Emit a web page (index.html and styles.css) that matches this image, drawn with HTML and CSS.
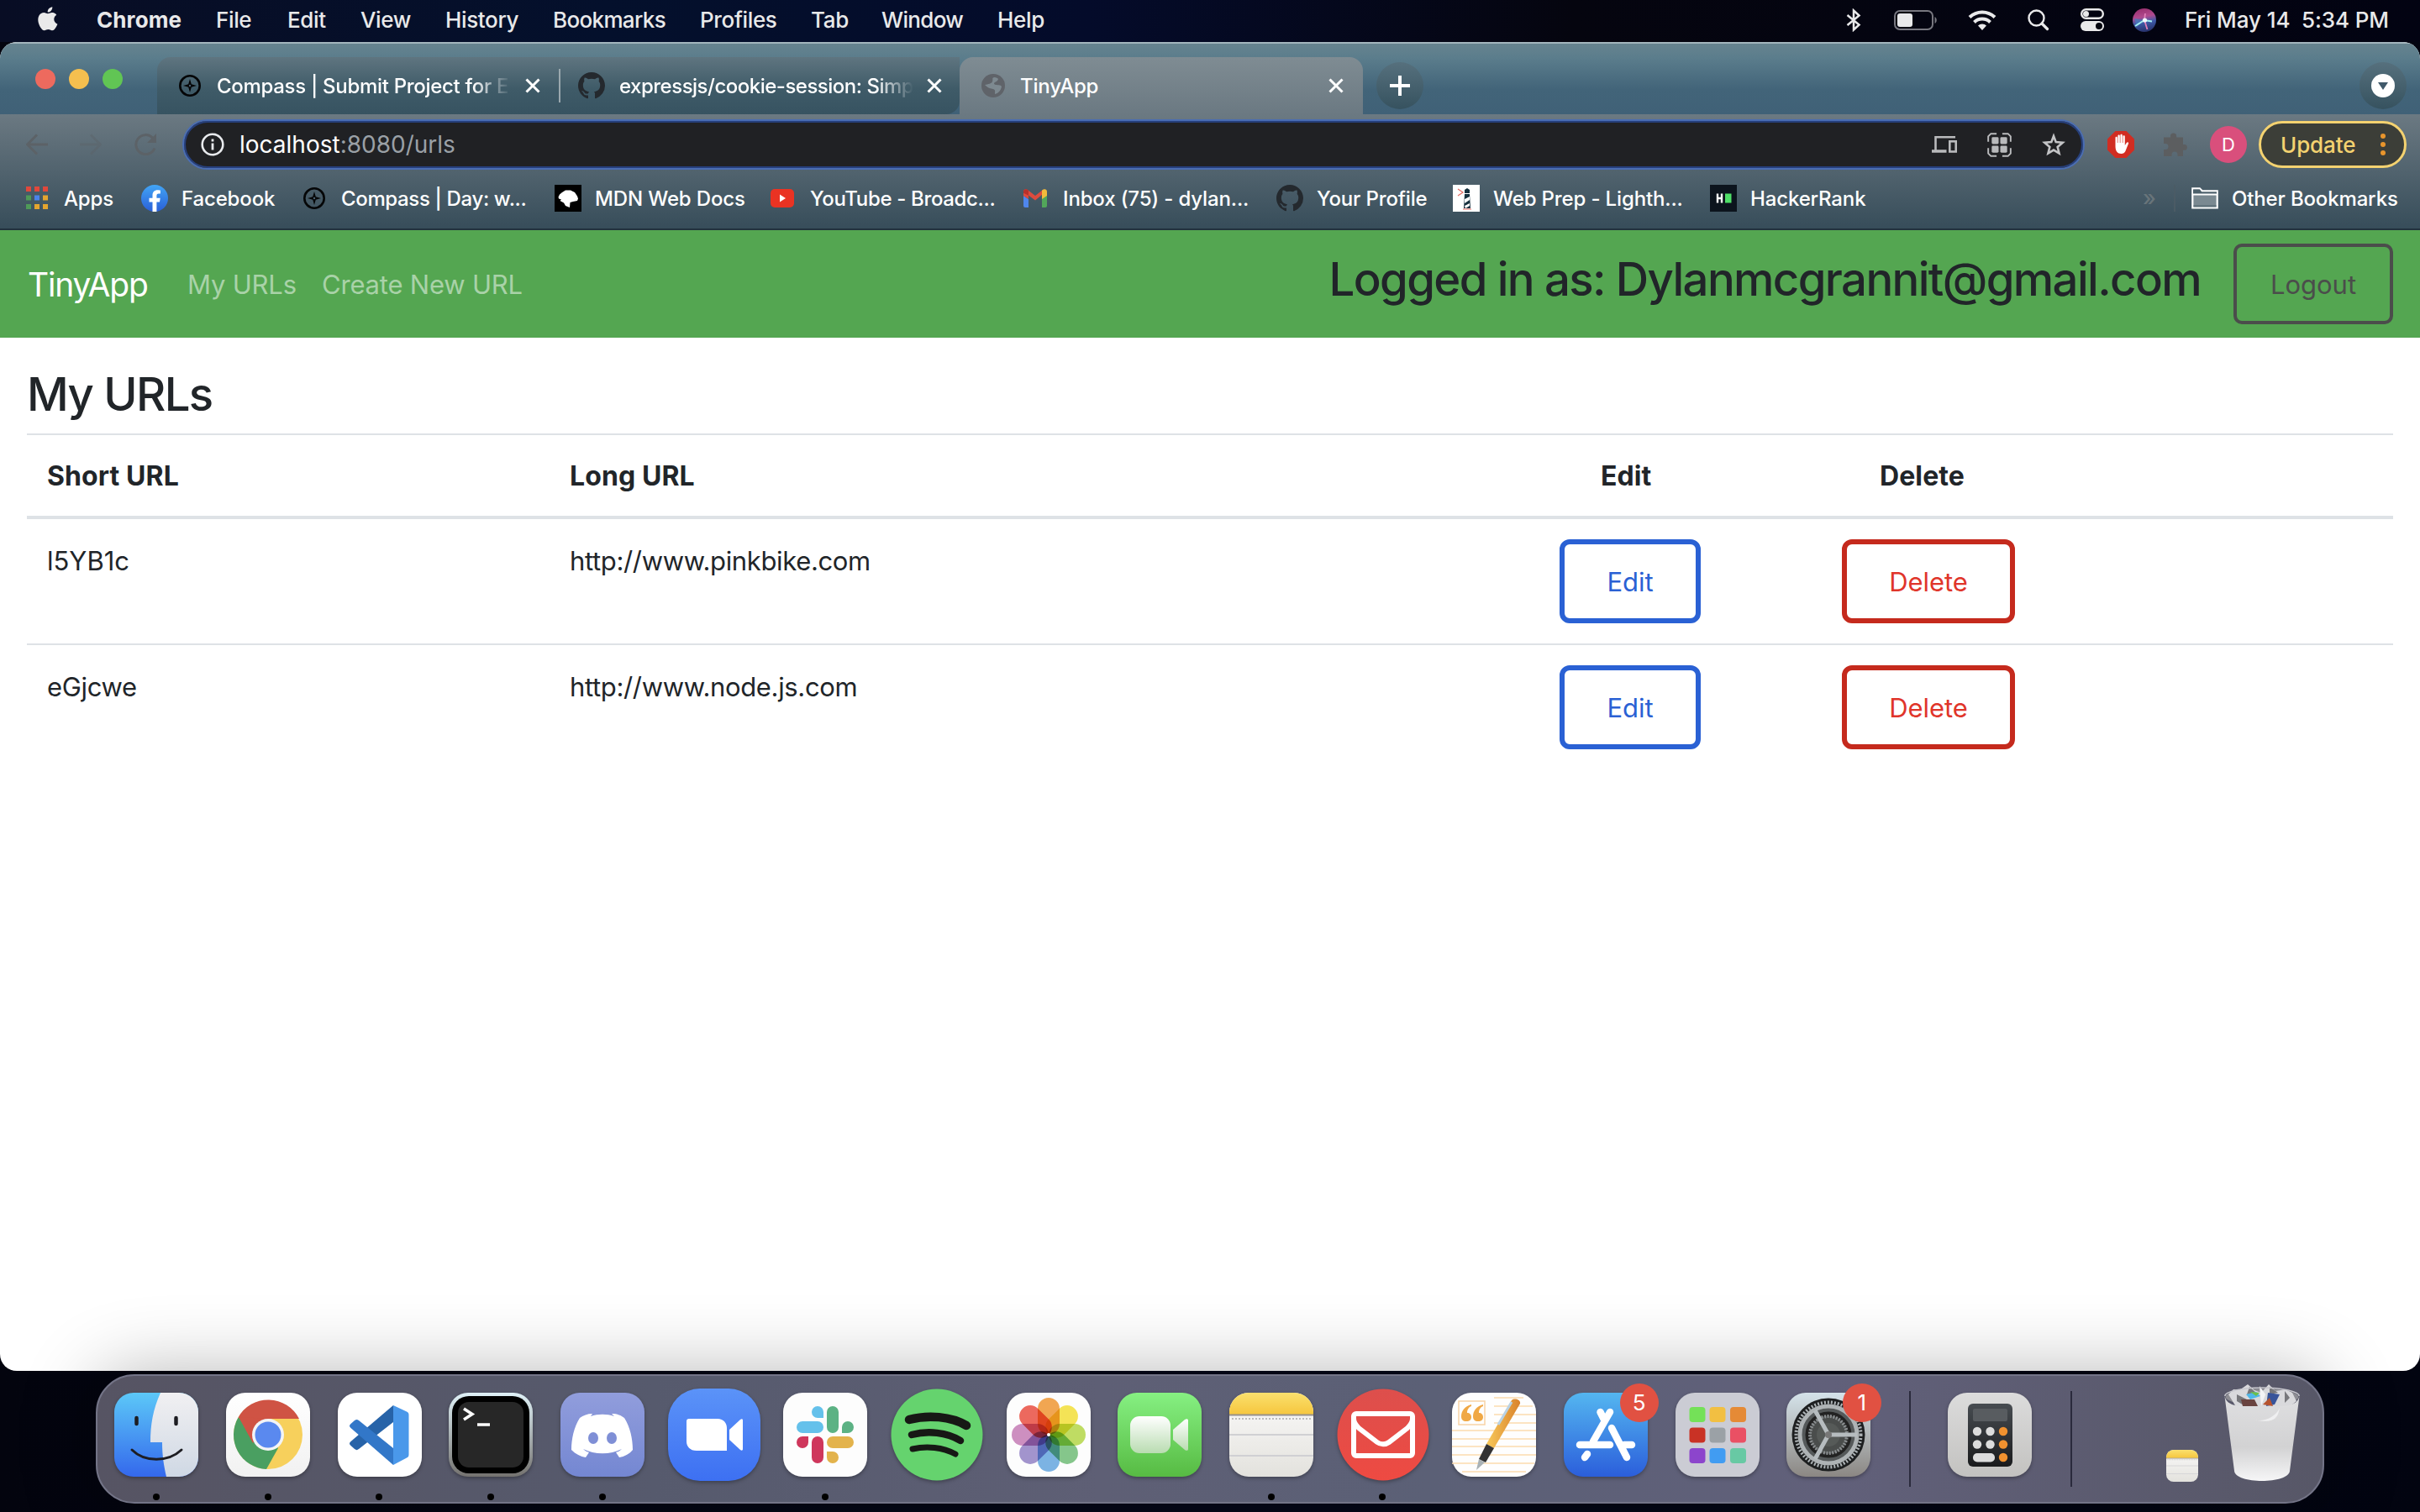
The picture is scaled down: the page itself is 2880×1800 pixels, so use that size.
FILE: index.html
```html
<!DOCTYPE html>
<html lang="en">
<head>
<meta charset="utf-8">
<title>TinyApp</title>
<link rel="stylesheet" href="styles.css">
</head>
<body>
<svg class="defs" width="0" height="0" aria-hidden="true">
  <defs>
    <linearGradient id="gFinder" x2="0" y2="1"><stop offset="0" stop-color="#5cc8f8"/><stop offset="1" stop-color="#3468ec"/></linearGradient>
    <linearGradient id="gFace" x2="0" y2="1"><stop offset="0" stop-color="#f1f0f2"/><stop offset="1" stop-color="#cfd8e4"/></linearGradient>
    <linearGradient id="gWhite" x2="0" y2="1"><stop offset="0" stop-color="#fff"/><stop offset="1" stop-color="#f1f1f1"/></linearGradient>
    <linearGradient id="gTerm" x2="0" y2="1"><stop offset="0" stop-color="#dff1f7"/><stop offset="1" stop-color="#74726f"/></linearGradient>
    <linearGradient id="gDiscord" x2="0" y2="1"><stop offset="0" stop-color="#919ddc"/><stop offset="1" stop-color="#7487d2"/></linearGradient>
    <linearGradient id="gZoom" x2="0" y2="1"><stop offset="0" stop-color="#5b93f8"/><stop offset="1" stop-color="#3d70f2"/></linearGradient>
    <linearGradient id="gFt" x2="0" y2="1"><stop offset="0" stop-color="#86f082"/><stop offset="1" stop-color="#57bb43"/></linearGradient>
    <linearGradient id="gCam" x2="0" y2="1"><stop offset="0" stop-color="#fff"/><stop offset="1" stop-color="#b9dcb1"/></linearGradient>
    <linearGradient id="gNote" x2="0" y2="1"><stop offset="0" stop-color="#fae06e"/><stop offset="1" stop-color="#f6c63d"/></linearGradient>
    <linearGradient id="gPaper" x2="0" y2="1"><stop offset="0" stop-color="#fbfafa"/><stop offset="1" stop-color="#e3e2dd"/></linearGradient>
    <linearGradient id="gMail" x2="0" y2="1"><stop offset="0" stop-color="#dd4f4c"/><stop offset="1" stop-color="#ee4a42"/></linearGradient>
    <linearGradient id="gStore" x2="0" y2="1"><stop offset="0" stop-color="#54b6f0"/><stop offset="1" stop-color="#2b5edb"/></linearGradient>
    <linearGradient id="gSet" x2="0" y2="1"><stop offset="0" stop-color="#d5e3ea"/><stop offset="1" stop-color="#8b8783"/></linearGradient>
    <linearGradient id="gCalc" x2="0" y2="1"><stop offset="0" stop-color="#dcdcdc"/><stop offset="1" stop-color="#c3c2c0"/></linearGradient>
    <linearGradient id="gCalcB" x2="0" y2="1"><stop offset="0" stop-color="#474c51"/><stop offset="1" stop-color="#1a1b1d"/></linearGradient>
    <linearGradient id="gTrash" x2="0" y2="1"><stop offset="0" stop-color="#dfdfe1"/><stop offset=".6" stop-color="#d2d2d3"/><stop offset="1" stop-color="#f6f6f7"/></linearGradient>
    <linearGradient id="gFb" x2="0" y2="1"><stop offset="0" stop-color="#42a5f5"/><stop offset="1" stop-color="#2a5fd8"/></linearGradient>
    <linearGradient id="gPen" x2="1" y2="0"><stop offset="0" stop-color="#f8c95a"/><stop offset="1" stop-color="#d9822b"/></linearGradient>
    <linearGradient id="gSiri" x1=".4" x2=".6" y2="1"><stop offset="0" stop-color="#9a3070"/><stop offset=".35" stop-color="#b04a8e"/><stop offset=".6" stop-color="#3d5aa8"/><stop offset="1" stop-color="#262f66"/></linearGradient>
    <symbol id="github" viewBox="0 0 16 16"><path d="M8 0C3.58 0 0 3.58 0 8c0 3.54 2.29 6.53 5.47 7.59.4.07.55-.17.55-.38 0-.19-.01-.82-.01-1.49-2.01.37-2.53-.49-2.69-.94-.09-.23-.48-.94-.82-1.13-.28-.15-.68-.52-.01-.53.63-.01 1.08.58 1.23.82.72 1.21 1.87.87 2.33.66.07-.52.28-.87.51-1.07-1.78-.2-3.64-.89-3.64-3.95 0-.87.31-1.59.82-2.15-.08-.2-.36-1.02.08-2.12 0 0 .67-.21 2.2.82.64-.18 1.32-.27 2-.27s1.36.09 2 .27c1.53-1.04 2.2-.82 2.2-.82.44 1.1.16 1.92.08 2.12.51.56.82 1.27.82 2.15 0 3.07-1.87 3.75-3.65 3.95.29.25.54.73.54 1.48 0 1.07-.01 1.93-.01 2.2 0 .21.15.46.55.38A8.01 8.01 0 0 0 16 8c0-4.42-3.58-8-8-8z"/></symbol>
    <symbol id="compass" viewBox="0 0 26 26"><circle cx="13" cy="13" r="11.7" fill="none" stroke="#050607" stroke-width="2.6"/><path d="M13 5l1.8 6.2L21 13l-6.200 1.800L13 21l-1.800-6.200L5 13l6.200-1.800z" fill="#050607"/><circle cx="13" cy="13" r="1.200" fill="#4a6070"/></symbol>
    <symbol id="close" viewBox="0 0 18 18"><path d="M1.500 1.500l15 15M16.500 1.500l-15 15" stroke="#fff" stroke-width="3" fill="none"/></symbol>
    <symbol id="notes" viewBox="0 0 100 100"><clipPath id="cNote"><rect width="100" height="100" rx="23"/></clipPath><g clip-path="url(#cNote)"><rect width="100" height="100" fill="url(#gPaper)"/><rect width="100" height="26" fill="url(#gNote)"/><path d="M0 26.500h100" stroke="#96918c" stroke-width="2"/><path d="M3 31h96" stroke="#bbb" stroke-width="2" stroke-dasharray="2 2"/><path d="M0 50h100M0 75h100" stroke="#d0d0d3" stroke-width="2"/></g></symbol>
  </defs>
</svg>

<header class="menubar">
  <svg class="apple" viewBox="0 0 26 32"><path d="M21.300 17c0-3.500 2.900-5.200 3-5.300-1.600-2.400-4.200-2.700-5.100-2.700-2.200-.2-4.200 1.300-5.300 1.300S11.100 9 9.300 9C6.900 9.100 4.700 10.400 3.500 12.500c-2.500 4.300-.6 10.700 1.800 14.200 1.200 1.700 2.600 3.600 4.500 3.600 1.800-.1 2.500-1.200 4.600-1.200 2.200 0 2.800 1.200 4.700 1.100 1.900 0 3.200-1.700 4.300-3.500 1.400-2 1.900-3.900 2-4-.1-.1-4.100-1.600-4.100-5.700zM17.800 6.700c1-1.200 1.700-2.800 1.500-4.500-1.400.1-3.100.9-4.100 2.100-.9 1-1.700 2.700-1.500 4.300 1.600.1 3.200-.8 4.100-1.900z"/></svg>
  <nav class="menus">
    <span class="app">Chrome</span><span>File</span><span>Edit</span><span>View</span><span>History</span><span class="tight">Bookmarks</span><span>Profiles</span><span>Tab</span><span class="tight">Window</span><span>Help</span>
  </nav>
  <div class="status">
    <svg width="18" height="28" viewBox="0 0 18 28"><path d="M1.500 8L15.500 19.500l-6.500 6V2.500l6.500 6L1.500 20" fill="none" stroke="#e9e9ea" stroke-width="2.500"/></svg>
    <svg width="52" height="24" viewBox="0 0 52 24"><rect x="1" y="1" width="45" height="22" rx="6" fill="none" stroke="#77777f" stroke-width="2"/><rect x="4" y="4" width="18" height="16" rx="3" fill="#e9e9ea"/><path d="M48.500 8c3 1.500 3 6.500 0 8z" fill="#77777f"/></svg>
    <svg width="34" height="24" viewBox="0 0 34 24"><g fill="none" stroke="#e9e9ea" stroke-width="4"><path d="M2 8.500a21.500 21.500 0 0 1 30 0"/><path d="M7.500 14.500a13.500 13.500 0 0 1 19 0"/></g><path d="M17 24l-5-5.500a7 7 0 0 1 10 0z" fill="#e9e9ea"/></svg>
    <svg width="26" height="26" viewBox="0 0 26 26"><circle cx="10.500" cy="10.500" r="9" fill="none" stroke="#e9e9ea" stroke-width="2.400"/><path d="M17 17l6.500 6.500" stroke="#e9e9ea" stroke-width="3.200" stroke-linecap="round"/></svg>
    <svg width="28" height="28" viewBox="0 0 28 28"><rect x="1.200" y="1.200" width="25.600" height="10.600" rx="5.300" fill="none" stroke="#e9e9ea" stroke-width="2.400"/><circle cx="6.500" cy="6.500" r="3.500" fill="#e9e9ea"/><rect y="15" width="28" height="12" rx="6" fill="#e9e9ea"/><circle cx="22" cy="21" r="4" fill="#04060f"/></svg>
    <svg width="28" height="28" viewBox="0 0 28 28"><circle cx="14" cy="14" r="14" fill="url(#gSiri)"/><path d="M2 12l12 2L5 22z" fill="#3f7fc0" opacity=".7"/><path d="M3 21l11-7 9 1.500" stroke="#a6f0f0" stroke-width="2" fill="none"/><path d="M14 14l3.500 11M15 6l-1 8" stroke="#e07fb8" stroke-width="1.800" fill="none"/><circle cx="14.500" cy="14" r="2.600" fill="#f0fbff"/></svg>
    <span class="clock">Fri May 14&nbsp; 5:34 PM</span>
  </div>
</header>

<main class="window">
  <div class="tabstrip">
    <div class="lights"><i class="red"></i><i class="yellow"></i><i class="green"></i></div>
    <div class="tab first">
      <svg width="26" height="26"><use href="#compass"/></svg>
      <span class="title">Compass | Submit Project for E</span>
      <svg class="x" width="18" height="18"><use href="#close"/></svg>
    </div>
    <div class="tab second">
      <svg width="32" height="32" fill="#24292e"><use href="#github"/></svg>
      <span class="title">expressjs/cookie-session: Simp</span>
      <svg class="x" width="18" height="18"><use href="#close"/></svg>
    </div>
    <div class="tab active">
      <svg width="28" height="28" viewBox="0 0 28 28"><circle cx="14" cy="14" r="14" fill="#5f6369"/><path d="M4 13c4-1 8-1 9-4s-1-4 2-5c3 0 4 1 5 2-1 4-5 3-5 6 2 2 7 0 9 3-1 5-4 8-8 9 0-3 1-5-2-6s-5 0-10-5z" fill="#7d8990"/></svg>
      <span class="title">TinyApp</span>
      <svg class="x" width="18" height="18"><use href="#close"/></svg>
    </div>
    <div class="round"><svg width="24" height="24"><path d="M12 0v24M0 12h24" stroke="#fff" stroke-width="4"/></svg></div>
    <div class="round last"><svg width="28" height="28"><circle cx="14" cy="14" r="14" fill="#fff"/><path d="M8 10h12l-6 9z" fill="#40596a"/></svg></div>
  </div>

  <div class="chrome">
    <div class="toolbar">
      <div class="navicons">
        <svg width="26" height="26" viewBox="0 0 26 26"><path d="M26 13H2M13 1.500L1.500 13 13 24.500"/></svg>
        <svg class="dim" width="26" height="26" viewBox="0 0 26 26"><path d="M0 13h24M13 1.500L24.500 13 13 24.500"/></svg>
        <svg width="28" height="26" viewBox="0 0 28 26"><path d="M25 17.500A11.500 11.500 0 1 1 22.500 5L26 9"/><path d="M27 0v11H16z" class="fill"/></svg>
      </div>
      <div class="omnibox">
        <svg width="28" height="28" viewBox="0 0 28 28"><circle cx="14" cy="14" r="12.300" fill="none" stroke="#e8eaed" stroke-width="2.600"/><path d="M14 12.500v8M14 7.500v3" stroke="#e8eaed" stroke-width="2.800"/></svg>
        <span class="url"><b>localhost</b><i>:8080/urls</i></span>
        <svg width="30" height="20" viewBox="0 0 30 20" fill="none" stroke="#b9babc" stroke-width="2.600"><path d="M28 1.300H4.500V17"/><path d="M0 18h17.500" stroke-width="3.600"/><rect x="21.300" y="6.300" width="7.400" height="12.200"/></svg>
        <svg width="29" height="29" viewBox="0 0 30 30"><path d="M1.200 11V4.500L4.500 1.200H11.500M18.500 1.200h7l3.300 3.300V11M28.800 19v6.500l-3.300 3.300H18.500M11.500 28.800H4.500l-3.300-3.300V19" fill="none" stroke="#b9babc" stroke-width="2"/><g fill="#b9babc"><rect x="5.500" y="5.500" width="8.500" height="8.500" rx="1.500"/><rect x="16" y="5.500" width="8.500" height="8.500" rx="1.500"/><rect x="5.500" y="16" width="8.500" height="8.500" rx="1.500"/><rect x="16" y="16" width="8.500" height="8.500" rx="1.500"/></g></svg>
        <svg width="28" height="28" viewBox="0 0 30 29"><path d="M15 3.800l2.900 7.600 8.600.7-6.500 5.600 2 8.100-7-4.300-7 4.300 2-8.100-6.500-5.600 8.600-.7z" fill="none" stroke="#c3c4c6" stroke-width="2.800"/></svg>
      </div>
      <div class="ext">
        <svg width="32" height="32" viewBox="0 0 32 32"><path d="M9.500 0h13L32 9.500v13L22.500 32h-13L0 22.500v-13z" fill="#d12d22"/><path d="M9.500 18V8c0-1.800 2.300-1.800 2.300 0v6h.6V5.800c0-1.800 2.400-1.800 2.400 0V14h.6V5c0-1.800 2.400-1.800 2.400 0v9h.6V6.500c0-1.800 2.400-1.800 2.400 0V17l2-3c1-1.500 2.900-.5 2.200 1l-3.600 9c-1 2-2.500 3-4.900 3-4.500 0-7-3-7-9z" fill="#fff"/></svg>
        <svg width="28" height="28" viewBox="0 0 28 28"><path d="M0 5.500h8V4a3.600 3.600 0 0 1 7.200 0v1.500H23V14h1.500a3.400 3.400 0 0 1 0 6.800H23V28h-6.500v-2a3.500 3.500 0 0 0-7 0v2H0v-8h2a3.500 3.500 0 0 0 0-7H0z" fill="#5c5e60"/></svg>
        <span class="avatar">D</span>
        <span class="update"><b>Update</b><svg width="6" height="26"><g fill="#e8952c"><circle cx="3" cy="3" r="3"/><circle cx="3" cy="13" r="3"/><circle cx="3" cy="23" r="3"/></g></svg></span>
      </div>
    </div>
    <div class="bookmarks">
      <div class="bm"><svg class="n" width="26" height="28" viewBox="0 0 26 28"><path d="M0 0h6v6H0zM10 0h6v6h-6zM20 0h6v6h-6z" fill="#e0483c"/><path d="M0 10.500h6v6H0z" fill="#4f9a58"/><path d="M10 10.500h6v6h-6z" fill="#4b83ea"/><path d="M20 10.500h6v6h-6zM10 21h6v6h-6zM20 21h6v6h-6z" fill="#e5a52f"/><path d="M0 21h6v6H0z" fill="#4f9a58"/></svg><span>Apps</span></div>
      <div class="bm"><svg width="32" height="32" viewBox="0 0 32 32"><circle cx="16" cy="16" r="16" fill="url(#gFb)"/><path d="M13.500 32V20.500H9.500v-4.700h4V12.500c0-4 2.400-6.200 6-6.200 1.700 0 3.400.3 3.400.3v4h-2c-2 0-2.500 1.200-2.500 2.400v2.800h4.300l-.7 4.700h-3.600V32z" fill="#fff"/></svg><span>Facebook</span></div>
      <div class="bm"><svg class="n" width="26" height="26"><use href="#compass"/></svg><span class="tight">Compass | Day: w...</span></div>
      <div class="bm"><svg width="32" height="32" viewBox="0 0 32 32"><path d="M0 0h32v32H0z"/><path d="M4.500 14.500l1.500-3 3-2.500 4-2.500h6l5 2.500 3 4.500 1 3-1 2.500-5 1-3.500 1-.5 6-5-2-2-3.500L6.500 19l1.500-1.500-3-1z" fill="#fff"/></svg><span>MDN Web Docs</span></div>
      <div class="bm"><svg class="n" width="28" height="22" viewBox="0 0 28 22"><rect width="28" height="22" rx="5" fill="#ea3323"/><path d="M11 6.500l7 4.500-7 4.500z" fill="#fff"/></svg><span class="tight">YouTube - Broadc...</span></div>
      <div class="bm"><svg class="n" width="28" height="22" viewBox="0 0 28 22"><path d="M0 5h6v17H2a2 2 0 0 1-2-2z" fill="#4f86ec"/><path d="M22 5h6v15a2 2 0 0 1-2 2h-4z" fill="#52a75a"/><path d="M0 3l6 4v5L0 8z" fill="#b8312b"/><path d="M0 3c0-3 3-3.500 5-2l9 7 9-7v5l-9 7.500L6 7.500v4L0 8z" fill="#dd4b3e"/><path d="M0 3.300C0 .3 3-.5 5 1l1 .8v6l-6-3z" fill="#b8312b"/><path d="M22 1.700c3-2.500 6-1.500 6 1.800V8l-6 4z" fill="#f3bb3c"/></svg><span>Inbox (75) - dylan...</span></div>
      <div class="bm"><svg width="32" height="32" fill="#24292e"><use href="#github"/></svg><span>Your Profile</span></div>
      <div class="bm"><svg width="32" height="32" viewBox="0 0 32 32"><path d="M0 0h32v32H0z" fill="#fff"/><path d="M6 5l6 4-6 4" fill="none" stroke="#e46a62" stroke-width="1.200"/><path d="M14 6l3-2 3 2v4h-6zM14 11h6l1 17h-8z" fill="#16303e"/><path d="M14 17l6-3v4l-6 4zM14 25l6-3v3l-5 3z" fill="#fff"/><path d="M12 29h10" stroke="#e46a62"/></svg><span>Web Prep - Lighth...</span></div>
      <div class="bm"><svg width="32" height="32" viewBox="0 0 32 32"><path d="M0 0h32v32H0z" fill="#0c141d"/><path d="M9 10.500v11M14 10.500v11M9 16h5" stroke="#fff" stroke-width="2.400"/><path d="M18 10.500h7.500v11H18z" fill="#4fdf68"/></svg><span>HackerRank</span></div>
      <div class="more">»</div>
      <div class="bm other"><svg width="32" height="26" viewBox="0 0 32 26"><path d="M1.300 24.500V1.300h8.500l3 3h17.900v20.200z" fill="#7a8991" stroke="#fff" stroke-width="2.200"/><path d="M2 2.500h8l2 3h18V8H2z" fill="#4b5f6a"/><path d="M1 8.500h30" stroke="#fff" stroke-width="2"/><path d="M2.500 22.300h27" stroke="#5e7079" stroke-width="2"/></svg><span>Other Bookmarks</span></div>
    </div>
  </div>

  <section class="page">
    <nav class="navbar">
      <a class="brand">TinyApp</a>
      <a class="link">My URLs</a>
      <a class="link">Create New URL</a>
      <h3 class="who">Logged in as: Dylanmcgrannit@gmail.com</h3>
      <button class="logout">Logout</button>
    </nav>
    <div class="content">
      <h3 class="heading">My URLs</h3>
      <div class="table">
        <div class="row head"><div>Short URL</div><div>Long URL</div><div class="he">Edit</div><div class="hd">Delete</div></div>
        <div class="row"><div class="id">l5YB1c</div><div>http://www.pinkbike.com</div><div><button class="btn edit">Edit</button></div><div><button class="btn del">Delete</button></div></div>
        <div class="row"><div>eGjcwe</div><div>http://www.node.js.com</div><div><button class="btn edit">Edit</button></div><div><button class="btn del">Delete</button></div></div>
      </div>
    </div>
  </section>
</main>

<footer class="dockarea">
<div class="dock">
  <div class="item run"><svg class="ic" viewBox="0 0 100 100"><clipPath id="cF"><rect width="100" height="100" rx="23"/></clipPath><g clip-path="url(#cF)"><rect width="100" height="100" fill="url(#gFinder)"/><path d="M55 0C46 20 43 38 43 59h14c0 16 2 28 5 41h38V0z" fill="url(#gFace)"/><path d="M26.500 30v7M73.500 30v7" stroke="#1d1d22" stroke-width="4.500" stroke-linecap="round"/><path d="M21 68c15 15 43 15 59 0" fill="none" stroke="#1d1d22" stroke-width="3" stroke-linecap="round"/></g></svg></div>
  <div class="item run"><svg class="ic" viewBox="0 0 100 100"><rect width="100" height="100" rx="23" fill="url(#gWhite)"/><circle cx="50" cy="50" r="41" fill="#f7d05c"/><path d="M50 50L14.500 29.500A41 41 0 0 0 48 91L62 66z" fill="#4a9f61"/><path d="M50 50L14.500 29.500A41 41 0 0 1 87 31H50z" fill="#cf5344"/><path d="M15 29l17 31 18-29z" fill="#cf5344"/><circle cx="50" cy="50" r="19" fill="#f3f4f6"/><circle cx="50" cy="50" r="15.500" fill="#5a89ef"/></svg></div>
  <div class="item run"><svg class="ic" viewBox="0 0 100 100"><rect width="100" height="100" rx="23" fill="#fff"/><path d="M66 15v20L25 67c-2 1.500-3 1.500-5 0l-4.500-4c-2-2-2-3 0-5z" fill="#2763a8"/><path d="M66 86V66L25 33c-2-1.500-3-1.500-5 0l-4.500 4c-2 2-2 3 0 5z" fill="#3277c8"/><path d="M66 15l16 7.500c2 1 2.500 2 2.500 4v47c0 2-.5 3-2.500 4L66 86z" fill="#4a98ea"/></svg></div>
  <div class="item run"><svg class="ic" viewBox="0 0 100 100"><rect width="100" height="100" rx="23" fill="url(#gTerm)"/><rect x="4" y="4" width="92" height="92" rx="20" fill="#000"/><rect x="11" y="11" width="78" height="78" rx="13" fill="#272727"/><path d="M18 19l10 6.500L18 32" fill="none" stroke="#fff" stroke-width="3.500"/><path d="M34 38h15" stroke="#fff" stroke-width="3.500"/></svg></div>
  <div class="item run"><svg class="ic" viewBox="0 0 100 100"><rect width="100" height="100" rx="23" fill="url(#gDiscord)"/><path d="M38 25l-2 3c9-3 19-3 28 0l-3-3c7 0 11 2 15 5 7 11 10 25 10 38-4 5-10 8-16 9l-4-6c3-1 5-2 7-4-14 7-32 7-46 0 2 2 4 3 7 4l-4 6c-6-1-12-4-17-9 0-13 3-27 10-38 4-3 9-5 15-5z" fill="#fff"/><ellipse cx="39" cy="54" rx="6" ry="7" fill="#7f8fd6"/><ellipse cx="61" cy="54" rx="6" ry="7" fill="#7f8fd6"/></svg></div>
  <div class="item"><svg class="ic big" viewBox="0 0 110 110"><rect width="110" height="110" rx="38" fill="url(#gZoom)"/><path d="M25 36h34c7 0 11 5 11 11v27H34c-8 0-12-5-12-11V39c0-2 1-3 3-3zM73 49l13-12c1.500-1 3-1 3 1v34c0 2-1.500 2-3 1L73 61z" fill="#fff"/></svg></div>
  <div class="item run"><svg class="ic" viewBox="0 0 100 100"><rect width="100" height="100" rx="23" fill="#fdfdfd"/><path d="M48 30H41a7 7 0 1 1 7-7zM23 34h18a7 7 0 0 1 0 14H23a7 7 0 0 1 0-14z" fill="#65c1eb"/><path d="M70 41v-0a7 7 0 1 1 7 7h-7zM66 23v18a7 7 0 0 1-14 0V23a7 7 0 0 1 14 0z" fill="#5cb284"/><path d="M52 70h7a7 7 0 1 1-7 7zM59 52h18a7 7 0 0 1 0 14H59a7 7 0 0 1 0-14z" fill="#e3b34c"/><path d="M30 52v7a7 7 0 1 1-7-7zM34 59a7 7 0 0 1 14 0v18a7 7 0 0 1-14 0z" fill="#cf375c"/></svg></div>
  <div class="item"><svg class="ic big" viewBox="0 0 110 110"><circle cx="55" cy="55" r="54.500" fill="#65d36e"/><g fill="none" stroke="#171815" stroke-linecap="round"><path d="M22 37c22-6 50-4 68 7" stroke-width="10.500"/><path d="M25 55c19-5 42-3 58 7" stroke-width="8.500"/><path d="M26 72c17-4 36-2 51 6" stroke-width="7"/></g></svg></div>
  <div class="item"><svg class="ic" viewBox="0 0 100 100"><rect width="100" height="100" rx="23" fill="#fdfdfd"/><g class="petals"><rect x="37" y="6" width="26" height="44" rx="13" fill="#f09a3a"/><rect x="37" y="6" width="26" height="44" rx="13" fill="#f3e03e" transform="rotate(45 50 50)"/><rect x="37" y="6" width="26" height="44" rx="13" fill="#b6d84d" transform="rotate(90 50 50)"/><rect x="37" y="6" width="26" height="44" rx="13" fill="#74be7b" transform="rotate(135 50 50)"/><rect x="37" y="6" width="26" height="44" rx="13" fill="#6aa9e0" transform="rotate(180 50 50)"/><rect x="37" y="6" width="26" height="44" rx="13" fill="#9585c6" transform="rotate(225 50 50)"/><rect x="37" y="6" width="26" height="44" rx="13" fill="#c67fb8" transform="rotate(270 50 50)"/><rect x="37" y="6" width="26" height="44" rx="13" fill="#ea5447" transform="rotate(315 50 50)"/></g><circle cx="50" cy="50" r="2" fill="#fff"/></svg></div>
  <div class="item"><svg class="ic" viewBox="0 0 100 100"><rect width="100" height="100" rx="23" fill="url(#gFt)"/><rect x="15" y="28" width="48" height="44" rx="11" fill="url(#gCam)"/><path d="M66 44l14-12c2-1.500 4-1 4 1v34c0 2-2 2.500-4 1L66 56z" fill="url(#gCam)"/></svg></div>
  <div class="item run"><svg class="ic"><use href="#notes"/></svg></div>
  <div class="item run"><svg class="ic big" viewBox="0 0 110 110"><circle cx="55" cy="55" r="54.500" fill="url(#gMail)"/><rect x="20" y="30" width="70" height="50" rx="3" fill="none" stroke="#fff" stroke-width="6"/><path d="M20 36c0 5 3 8 6 11l22 17c4 3 10 3 14 0l22-17c3-3 6-6 6-11" fill="none" stroke="#fff" stroke-width="6"/></svg></div>
  <div class="item"><svg class="ic" viewBox="0 0 100 100"><rect width="100" height="100" rx="23" fill="#fefefe"/><path d="M50 6h35M50 16h46M50 26h50M50 36h50M0 45h100M0 55h100M0 64h100M0 74h100M0 84h98M12 94h76" stroke="#fbdcae" stroke-width="1.500"/><rect x="8" y="10" width="31" height="28" fill="none" stroke="#f8d3a6" stroke-width="1.500"/><path d="M23 14c-8 2-12 8-12 14 0 4 2 6 6 6s6-2 6-5-2-5-5-5c0-4 2-7 5-8zM37 14c-8 2-12 8-12 14 0 4 2 6 6 6s6-2 6-5-2-5-5-5c0-4 2-7 5-8z" fill="#f0a845"/><path d="M71 9c3-3 11-1 10 4L50 66l-9-5z" fill="url(#gPen)"/><path d="M71 11L55 38" stroke="#b9d2e4" stroke-width="3"/><path d="M41 61l9 5-10 17-8-4z" fill="#333"/><path d="M32 79l7 4-10 9z" fill="#a9b1b5"/></svg></div>
  <div class="item"><svg class="ic" viewBox="0 0 100 100"><rect width="100" height="100" rx="23" fill="url(#gStore)"/><g stroke="#fff" stroke-width="8.500" stroke-linecap="round"><path d="M55 23L35 58M43.500 23l4 8M57 42l18 35M19 62h36M72 62h9M28 73l-3 4"/></g></svg><em class="badge">5</em></div>
  <div class="item"><svg class="ic" viewBox="0 0 100 100"><rect width="100" height="100" rx="23" fill="#cbccd4"/><rect x="16.500" y="17" width="19" height="18" rx="4" fill="#74e158"/><rect x="40.500" y="17" width="19" height="18" rx="4" fill="#f2bf42"/><rect x="65" y="17" width="19" height="18" rx="4" fill="#e58a36"/><rect x="16.500" y="41.500" width="19" height="18" rx="4" fill="#c93225"/><rect x="40.500" y="41.500" width="19" height="18" rx="4" fill="#9ba1a6"/><rect x="65" y="41.500" width="19" height="18" rx="4" fill="#ea5064"/><rect x="16.500" y="66" width="19" height="18" rx="4" fill="#8c45cc"/><rect x="40.500" y="66" width="19" height="18" rx="4" fill="#419cf2"/><rect x="65" y="66" width="19" height="18" rx="4" fill="#68c9a4"/></svg></div>
  <div class="item"><svg class="ic" viewBox="0 0 100 100"><rect width="100" height="100" rx="23" fill="url(#gSet)"/><circle cx="50" cy="50" r="43.500" fill="#1d1f20"/><circle cx="50" cy="50" r="38.500" fill="none" stroke="#adb3b6" stroke-width="4" stroke-dasharray="2 2"/><circle cx="50" cy="50" r="34" fill="#55595a" stroke="#aeb3b5" stroke-width="5"/><circle cx="50" cy="50" r="25" fill="none" stroke="#222" stroke-width="5"/><circle cx="50" cy="50" r="22" fill="#4a4d4c" stroke="#8a8e90" stroke-width="4" stroke-dasharray="2 1.500"/><circle cx="50" cy="50" r="14" fill="#565a58"/><path d="M50 50h34M50 50L34 21M50 50L34 79" stroke="#b6bcbf" stroke-width="5"/><circle cx="50" cy="50" r="4" fill="#777"/></svg><em class="badge">1</em></div>
  <i class="sep"></i>
  <div class="item calc"><svg class="ic" viewBox="0 0 100 100"><rect width="100" height="100" rx="23" fill="url(#gCalc)"/><rect x="24" y="13" width="53" height="75" rx="6" fill="url(#gCalcB)"/><rect x="30" y="19" width="41" height="15" rx="2" fill="#585c60"/><g fill="#dcdcdc"><circle cx="35" cy="46" r="5.200"/><circle cx="50.500" cy="46" r="5.200"/><circle cx="35" cy="61.500" r="5.200"/><circle cx="50.500" cy="61.500" r="5.200"/><rect x="30" y="72" width="26" height="10.500" rx="5"/></g><g fill="#f0912f"><circle cx="66" cy="46" r="5.200"/><circle cx="66" cy="61.500" r="5.200"/><circle cx="66" cy="77" r="5.200"/></g></svg></div>
  <i class="sep"></i>
  <svg class="mini" width="38" height="38"><use href="#notes"/></svg>
  <svg class="trash" width="90" height="116" viewBox="0 0 90 116"><ellipse cx="45" cy="15" rx="43.500" ry="10" fill="#8d8d93"/><path d="M5 12l6-6 7 1 10-7 8 7 8 3 9-10 8 8 12-2 8 4 5 10-12 10H16z" fill="#d9d9dc"/><path d="M15 12l12 6-2 8-10-6zM30 3l9 8-12 1zM54 3l10 7-10 2zM72 8l6 8-6 6z" fill="#77777b"/><path d="M26 12l12-3 5 5-12 4z" fill="#4fb7e8"/><path d="M31 9l11 1-4 4z" fill="#6cc04a"/><path d="M52 10l14 2-6 12-10 2z" fill="#38549a"/><path d="M46 24l8-8 4 10z" fill="#b6532f"/><path d="M20 18l16 0 4 8H22z" fill="#6a4440"/><path d="M42 2l2 24 5-14z" fill="#f4f4f6"/><path d="M.5 14C4 28 20 26 45 26s41 2 44.500-12L78 103c-1 16-65 16-66 0z" fill="url(#gTrash)"/><path d="M.8 14a44.200 10 0 0 1 88.400 0" fill="none" stroke="#c8c8ce" stroke-width="1.500"/><path d="M34 42c14 4 28-4 32-14-2 10-4 20-32 14z" fill="#efeff1"/></svg>
</div>
</footer>
</body>
</html>
```
FILE: styles.css
```css
* { box-sizing: border-box; }
body {
  margin: 0;
  width: 2880px;
  height: 1800px;
  overflow: hidden;
  font-family: Inter, "Liberation Sans", sans-serif;
  color: #212529;
  background: linear-gradient(90deg, #03040e, #050819 50%, #020410);
  display: flex;
  flex-direction: column;
}
svg { display: block; flex: none; }
.defs { position: absolute; }

.menubar {
  height: 50px;
  flex: none;
  display: flex;
  align-items: center;
  padding: 0 38px 3px 43px;
  color: #e9e9ea;
  font-size: 26px;
  font-weight: 500;
  line-height: 32px;
  letter-spacing: -.35px;
  background: linear-gradient(90deg, #080d24, #04102c 25%, #040b2a 45%, #05050f 65%, #020312);
}
.apple { width: 26px; height: 32px; fill: #e9e9ea; margin-right: 46px; margin-top: -4px; }
.menus { display: grid; grid-template-columns: 142px 85px 87px 101px 128px 175px 132px 84px 138px 60px; white-space: nowrap; }
.menus .tight { letter-spacing: -.65px; }
.menus .app { font-weight: 700; letter-spacing: .1px; }
.status { margin-left: auto; display: grid; grid-template-columns: 57px 88px 71px 63px 62px 62px 242px; align-items: center; white-space: nowrap; }
.clock { font-weight: 450; letter-spacing: -.1px; }

.window {
  height: 1582px;
  flex: none;
  border-radius: 20px;
  overflow: hidden;
  background: #fff;
  display: flex;
  flex-direction: column;
}
.tabstrip {
  height: 86px;
  flex: none;
  display: flex;
  align-items: flex-end;
  border-top: 2px solid #a3b5bd;
  background: linear-gradient(#66838f, #5b7d8c 20%, #426479 65%, #406177);
  color: #fff;
  font-size: 24px;
}
.lights { width: 187px; height: 84px; padding: 0 0 0 42px; display: flex; gap: 16px; align-items: center; }
.lights i { width: 24px; height: 24px; border-radius: 50%; }
.red { background: #ed6a5e; }
.yellow { background: #f5bf4f; }
.green { background: #61c554; }
.tab { height: 68px; display: flex; align-items: center; background: linear-gradient(#5f7580, #3f5b68 55%, #375361); }
.title { width: 350px; white-space: nowrap; font-weight: 480; }
.first { width: 478px; padding-left: 26px; border-radius: 16px 0 0 0; }
.first .title { margin-left: 19px; letter-spacing: -.3px; mask-image: linear-gradient(90deg, #000 87%, transparent); }
.first .x { margin-left: 17px; }
.second { width: 477px; border-radius: 0 0 16px 0; background: linear-gradient(#9aa8ae, #9aa8ae) 0 50% / 2px 40px no-repeat, linear-gradient(#5f7580, #3f5b68 55%, #375361); padding-left: 23px; }
.second .title { margin-left: 17px; letter-spacing: -.5px; mask-image: linear-gradient(90deg, #000 87%, transparent); }
.second .x { margin-left: 16px; }
.active { width: 480px; padding-left: 26px; border-radius: 16px 16px 0 0; background: linear-gradient(#7f8c93, #6b7982); }
.active .title { margin-left: 18px; letter-spacing: -.2px; }
.active .x { margin-left: 17px; }
.round { width: 56px; height: 56px; border-radius: 50%; background: linear-gradient(#56707d, #36525f); display: grid; place-items: center; margin: 0 0 6px 16px; }
.last { margin-left: auto; margin-right: 16px; }

.chrome { height: 138px; flex: none; border-bottom: 2px solid #22323d; background: linear-gradient(#6b7982, #374d5a); }
.toolbar { height: 72px; display: flex; align-items: center; }
.navicons { width: 217px; flex: none; padding-left: 31px; display: grid; grid-template-columns: 64px 64px 28px; }
.navicons svg { fill: none; stroke: #5c6267; stroke-width: 3; }
.navicons .dim { opacity: .4; }
.navicons .fill { fill: #5c6267; stroke: none; }
.omnibox { width: 2264px; height: 60px; border-radius: 30px; border: 2px solid #4a6db3; box-shadow: inset 0 0 0 2px #263f7c; background: #202124; display: flex; align-items: center; gap: 36px; padding: 0 21px 0 20px; }
.url { font-size: 28px; margin-right: auto; margin-left: -18px; }
.url b { font-weight: 400; color: #fff; }
.url i { font-style: normal; color: #9aa0a6; }
.ext { display: flex; align-items: center; padding-left: 27px; }
.ext > svg + svg { margin-left: 35px; }
.avatar { width: 44px; height: 44px; margin: 0 14px 0 27px; border-radius: 50%; background: #d94f7c; color: #fff; font-size: 22px; line-height: 44px; text-align: center; }
.update { width: 176px; height: 56px; border-radius: 28px; border: 3px solid #f4d270; background: #3c3e38; color: #f4d270; font-size: 26px; display: flex; align-items: center; justify-content: space-between; padding: 0 22px 0 23px; }
.update b { font-weight: 500; letter-spacing: -.1px; }

.bookmarks { height: 56px; display: grid; align-items: center; grid-template-columns: 137px 193px 299px 257px 301px 301px 210px 306px 515px 37px 290px; padding-left: 31px; color: #fff; font-size: 24px; font-weight: 470; letter-spacing: -.15px; white-space: nowrap; }
.bm { display: flex; align-items: center; gap: 16px; }
.bm .tight { letter-spacing: -.35px; }
.bm .n { margin-right: 3px; }
.more { color: #68747a; font-size: 26px; line-height: 32px; }
.other { border-left: 2px solid #4b5b65; padding-left: 19px; height: 32px; }

.navbar { height: 128px; background: #54a651; display: flex; align-items: center; padding: 0 32px; }
.brand { font-size: 39px; font-weight: 430; color: #fff; width: 191px; letter-spacing: -1.2px; padding-left: 1px; }
.link { font-size: 31px; color: #a9d2a8; width: 160px; white-space: nowrap; letter-spacing: -.2px; padding-top: 1px; }
.who { font-size: 54.5px; font-weight: 500; line-height: 67px; margin: 0 39px 11px auto; white-space: nowrap; letter-spacing: -1.62px; }
.logout { width: 190px; height: 96px; border: 4px solid #4b4d4b; border-radius: 10px; background: none; font: 400 31px/48px Inter, sans-serif; color: #4b4d4b; padding: 1px 0 0; }

.content { padding: 32px 32px 0; }
.heading { font-size: 54.5px; font-weight: 500; line-height: 70px; margin: 0 0 12px; letter-spacing: -1.6px; }
.row { display: grid; grid-template-columns: 622px 1178px 336px 680px; border-top: 2px solid #dee2e6; font-size: 31px; line-height: 51px; letter-spacing: -.35px; }
.row > div { padding: 24px 24px 0; }
.row > .id { letter-spacing: 0; }
.head { font-size: 32px; font-weight: 700; line-height: 49px; letter-spacing: .1px; border-bottom: 4px solid #dee2e6; height: 102px; }
.head + .row { border-top: 0; height: 148px; }
.row > .he { padding-left: 73px; }
.row > .hd { padding-left: 69px; }
.btn { display: block; height: 100px; padding: 2px 0 0; border: 6px solid; border-radius: 12px; background: #fff; font: 400 31px/48px Inter, sans-serif; letter-spacing: -.1px; }
.edit { width: 168px; color: #2a61d4; }
.del { width: 206px; border-color: #c52a1d; color: #e0352a; }

.dockarea { height: 168px; padding: 4px 114px 10px; }
.dock { position: relative; width: 2652px; height: 154px; border-radius: 46px; border: 2px solid #737487; background: linear-gradient(90deg, #565463, #565a6d 25%, #5e5f75 45%, #5b6076 60%, #61607a 78%, #575767); display: flex; padding-left: 4px; box-shadow: 0 0 90px 0 rgba(0, 0, 0, .3); }
.item { width: 132.67px; height: 150px; position: relative; display: grid; justify-content: center; align-content: start; padding-top: 20px; }
.ic { width: 100px; height: 100px; filter: drop-shadow(0 2px 2px rgba(0, 0, 0, .3)); }
.big { width: 110px; height: 110px; margin-top: -5px; }
.run::after { content: ""; position: absolute; left: 62px; bottom: 2px; width: 8px; height: 8px; border-radius: 50%; background: #000; }
.badge { position: absolute; left: 83px; top: 9px; width: 46px; height: 46px; border-radius: 50%; background: #e15142; color: #fff; font: 400 26px/46px Inter, sans-serif; text-align: center; }
.petals rect { mix-blend-mode: multiply; opacity: .88; }
.petals { isolation: isolate; }
.sep { width: 2px; height: 114px; background: #2a2a3c; margin: 18px 0 0 29px; }
.calc { margin-left: 28px; }
.calc + .sep { margin-left: 30px; }
.mini { margin: 88px 0 0 112px; }
.trash { margin: 10px 0 0 31px; }
```
